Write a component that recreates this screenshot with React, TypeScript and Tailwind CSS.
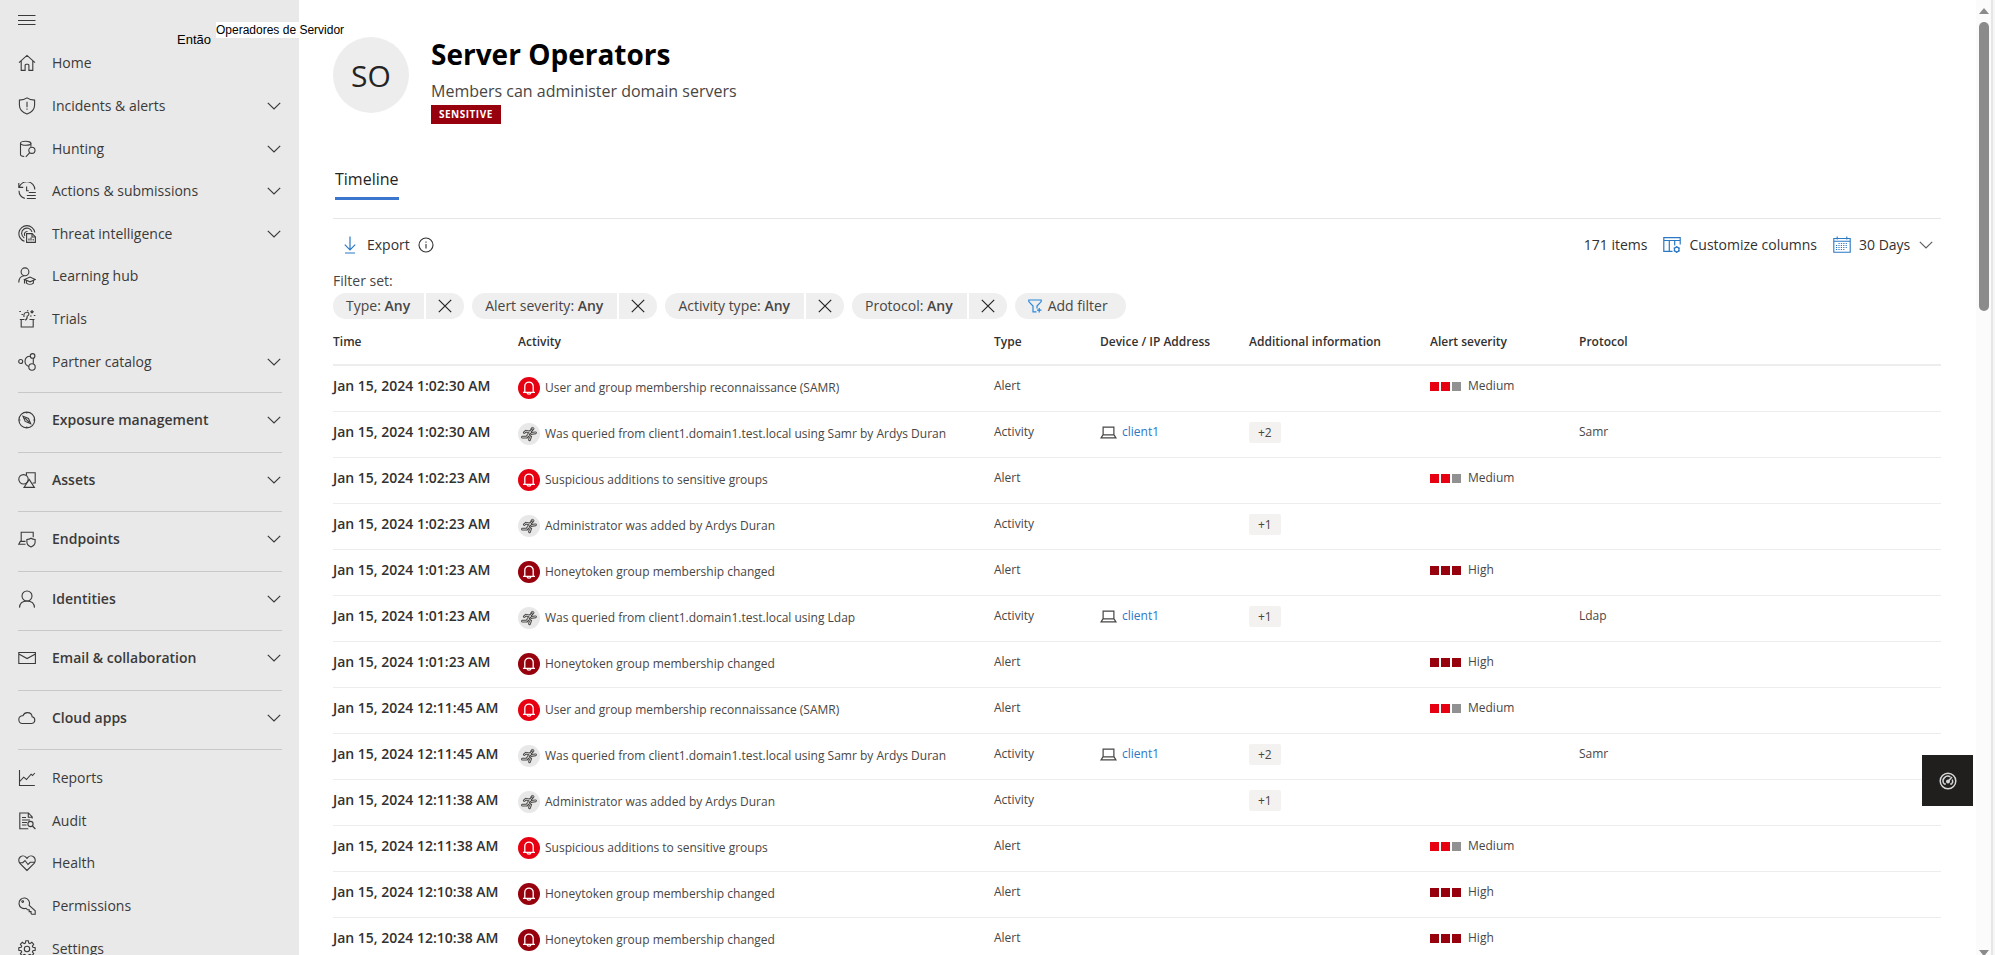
import { useState } from 'react';
import type { ReactNode } from 'react';

type Severity = 'Medium' | 'High';

interface TimelineRow {
  time: string;
  activity: string;
  type: 'Alert' | 'Activity';
  device?: string;
  extra?: string;
  severity?: Severity;
  protocol?: string;
}

const icons: Record<string, ReactNode> = {
  home: (
    <path d="M1 8.6 9 1.4l8 7.2M3.2 7v9.4h3.9v-5.2c0-.6.4-1 1-1h1.800c.6 0 1 .4 1 1v5.200h3.900V7" />
  ),
  incidents: (
    <>
      <path d="M9 .9c2 1.500 4.600 2.200 7.600 2.200v4.900c0 4.300-2.900 7.300-7.600 9.100C4.300 15.300 1.400 12.300 1.400 8V3.100C4.400 3.100 7 2.400 9 .9Z" />
      <path d="M9 4.800v5.400M9 11.500v1.300" />
    </>
  ),
  hunting: (
    <>
      <ellipse cx="7.700" cy="3.300" rx="5.200" ry="2" />
      <path d="M2.500 3.300v11.200c0 1 1.600 1.900 3.700 2M12.900 3.300v3.400" />
      <circle cx="13.900" cy="10.300" r="3.100" />
      <path d="m11.800 12.600-4 4.200" />
    </>
  ),
  actions: (
    <>
      <path d="M.8 1v4.400h4.400M1.200 5.200A8 8 0 0 1 16.800 7.600M1 8.800a8 8 0 0 0 5.800 7.600" />
      <path d="M8.600 4.500v4.300h2.200M10.800 10.500h7M8.800 13.500h9M8.800 16.500h9" />
    </>
  ),
  threat: (
    <>
      <path d="M6.500 16.300A8 8 0 1 1 16.800 7.500M6.300 13A5.300 5.300 0 1 1 14 6.800M7 10.800A2.700 2.700 0 0 1 9.500 6.500" />
      <path d="M8.600 8.600h5.500l3.300 3.300v5.500H8.600Z" />
      <path d="M14 8.600v3.400h3.400M11 15.500v-2M13 15.500v-3M15.200 15.500v-1.500" />
    </>
  ),
  learning: (
    <>
      <circle cx="7" cy="4.800" r="3.900" />
      <path d="M.8 15.500c0-3.700 2.200-6.400 5.400-6.800" />
      <path d="m6.500 12.500 5.500-2.400 5.300 2.400-5.300 2.300ZM8.400 13.500v2.600c2 1.500 5.200 1.500 7 0v-2.600M6.500 12.500v4" />
    </>
  ),
  trials: (
    <>
      <path d="M3.200 9.600v7.400h12V9.600M1.800 9.500h4.700M11.500 9.500h5M6 7c-.6-3 .6-4.800 3-4.800s2.600 3.300.4 3.600M9.200 5.800c.2 2.200-.4 3.700-2 4.400" />
      <path d="M1.300 1.500h1.600M3.500 4.500h1.400M12.800 1.800l1.200-1 1.200 1-1.200 1.200ZM12 6h1.600M15.800 5.500h1.600M9 .8h1.300" />
    </>
  ),
  partner: (
    <>
      <circle cx="2.700" cy="8.500" r="2" />
      <circle cx="14.600" cy="2.900" r="2.300" />
      <circle cx="14" cy="14" r="3.200" />
      <path d="M15.300 5.200v5.600M12.300 3.200C9 3.200 7 5.500 7 8.500c0 2.200 1.200 4 3.800 4.900" />
    </>
  ),
  exposure: (
    <>
      <circle cx="8.800" cy="9" r="7.900" />
      <path d="m5 5.200 5.500 2.300 2.200 5.200-5.500-2.300ZM6.500 6.700l4.500 4.500M8.800 1v1.600M8.800 15.400V17M.8 9h1.600M15.200 9h1.600" />
    </>
  ),
  assets: (
    <>
      <path d="M8.400 4.500V1.700h8.800V12h-2.600" />
      <circle cx="5.500" cy="8.300" r="4.700" />
      <path d="m11.200 8.400 5.200 8H6Z" />
    </>
  ),
  endpoints: (
    <>
      <path d="M3.200 11.400V2.300h12v5M7.500 11.400H2.300L.8 14.200h6.700" />
      <path d="M13 8.300c1.100.8 2.500 1.200 4.100 1.200v2.600c0 2.300-1.500 3.900-4.100 4.900-2.600-1-4.100-2.600-4.100-4.900V9.500c1.600 0 3-.4 4.100-1.200Z" />
    </>
  ),
  identities: (
    <>
      <circle cx="9" cy="6" r="5" />
      <path d="M1.500 17.600c.2-4 2.700-6.600 7.500-6.600s7.300 2.600 7.500 6.600" />
    </>
  ),
  email: <path d="M.8 3.500h16.600v11H.8ZM.8 5l8.300 4.500L17.400 5" />,
  cloud: (
    <path d="M4.200 14.500h9.600a3.400 3.400 0 0 0 .3-6.700C14 5.200 11.800 3.600 9.400 3.600c-2.200 0-3.700 1.200-4.500 3.100C2.600 6.500.8 8.200.8 10.600c0 2.300 1.500 3.900 3.400 3.900Z" />
  ),
  reports: <path d="M1.500 1v15.500h15.300M1.700 12.500l4-4.300 2.800 2.300 4.600-5.300 1.400 1.300L16.800 4" />,
  audit: (
    <>
      <path d="M14.200 6.500V5L10.500 1H1.800v15.800h8.500M10.300 1.200v4h4" />
      <path d="M4 5.500h4M4 8h8M4 10.500h5M4 13h4.500" />
      <circle cx="12.500" cy="12" r="2.600" />
      <path d="m14.400 14 3 3" />
    </>
  ),
  health: (
    <path d="M9 16.500 1.900 9.300C.3 7.500.4 4.600 2.200 3c1.800-1.500 4.400-1.300 5.900.4l.9 1 .9-1c1.500-1.700 4.100-1.900 5.900-.4 1.800 1.600 1.900 4.500.3 6.300ZM1.500 8.700h3.300L7 6.500l3 4 2.200-2.200h4.500" />
  ),
  permissions: (
    <>
      <path d="M11.200 8.300a5.300 5.300 0 1 0-3.100 3l1.400 1.500h1.700v1.800h1.800v1.700l.8.900h3.400v-3.400Z" />
      <circle cx="4.700" cy="4.600" r=".9" />
    </>
  ),
  settings: (
    <>
      <circle cx="9" cy="9" r="2.700" />
      <path d="m7.800.8-.4 2.300-1.200.5-1.900-1.300-1.900 1.900 1.300 1.900-.5 1.200-2.400.4v2.600l2.400.4.5 1.200-1.300 1.900 1.900 1.900 1.900-1.300 1.200.5.4 2.300h2.500l.4-2.300 1.200-.5 1.900 1.300 1.900-1.900-1.300-1.900.5-1.200 2.300-.4V7.700l-2.300-.4-.5-1.200 1.300-1.900-1.900-1.900L12 3.600l-1.200-.5-.5-2.300Z" />
    </>
  ),
};

const mainItems = [
  { label: 'Home', icon: 'home' },
  { label: 'Incidents & alerts', icon: 'incidents', expandable: true },
  { label: 'Hunting', icon: 'hunting', expandable: true },
  { label: 'Actions & submissions', icon: 'actions', expandable: true },
  { label: 'Threat intelligence', icon: 'threat', expandable: true },
  { label: 'Learning hub', icon: 'learning' },
  { label: 'Trials', icon: 'trials' },
  { label: 'Partner catalog', icon: 'partner', expandable: true },
];

const sectionItems = [
  { label: 'Exposure management', icon: 'exposure' },
  { label: 'Assets', icon: 'assets' },
  { label: 'Endpoints', icon: 'endpoints' },
  { label: 'Identities', icon: 'identities' },
  { label: 'Email & collaboration', icon: 'email' },
  { label: 'Cloud apps', icon: 'cloud' },
];

const bottomItems = [
  { label: 'Reports', icon: 'reports' },
  { label: 'Audit', icon: 'audit' },
  { label: 'Health', icon: 'health' },
  { label: 'Permissions', icon: 'permissions' },
  { label: 'Settings', icon: 'settings' },
];

const initialFilters = ['Type', 'Alert severity', 'Activity type', 'Protocol'];

const SAMR_ALERT = 'User and group membership reconnaissance (SAMR)';
const SAMR_QUERY = 'Was queried from client1.domain1.test.local using Samr by Ardys Duran';
const LDAP_QUERY = 'Was queried from client1.domain1.test.local using Ldap';
const SUSPICIOUS = 'Suspicious additions to sensitive groups';
const ADMIN_ADDED = 'Administrator was added by Ardys Duran';
const HONEYTOKEN = 'Honeytoken group membership changed';

const rows: TimelineRow[] = [
  { time: 'Jan 15, 2024 1:02:30 AM', activity: SAMR_ALERT, type: 'Alert', severity: 'Medium' },
  { time: 'Jan 15, 2024 1:02:30 AM', activity: SAMR_QUERY, type: 'Activity', device: 'client1', extra: '+2', protocol: 'Samr' },
  { time: 'Jan 15, 2024 1:02:23 AM', activity: SUSPICIOUS, type: 'Alert', severity: 'Medium' },
  { time: 'Jan 15, 2024 1:02:23 AM', activity: ADMIN_ADDED, type: 'Activity', extra: '+1' },
  { time: 'Jan 15, 2024 1:01:23 AM', activity: HONEYTOKEN, type: 'Alert', severity: 'High' },
  { time: 'Jan 15, 2024 1:01:23 AM', activity: LDAP_QUERY, type: 'Activity', device: 'client1', extra: '+1', protocol: 'Ldap' },
  { time: 'Jan 15, 2024 1:01:23 AM', activity: HONEYTOKEN, type: 'Alert', severity: 'High' },
  { time: 'Jan 15, 2024 12:11:45 AM', activity: SAMR_ALERT, type: 'Alert', severity: 'Medium' },
  { time: 'Jan 15, 2024 12:11:45 AM', activity: SAMR_QUERY, type: 'Activity', device: 'client1', extra: '+2', protocol: 'Samr' },
  { time: 'Jan 15, 2024 12:11:38 AM', activity: ADMIN_ADDED, type: 'Activity', extra: '+1' },
  { time: 'Jan 15, 2024 12:11:38 AM', activity: SUSPICIOUS, type: 'Alert', severity: 'Medium' },
  { time: 'Jan 15, 2024 12:10:38 AM', activity: HONEYTOKEN, type: 'Alert', severity: 'High' },
  { time: 'Jan 15, 2024 12:10:38 AM', activity: HONEYTOKEN, type: 'Alert', severity: 'High' },
];

const NavIcon = ({ name }: { name: string }) => (
  <svg
    className="w-[18px] h-[18px] shrink-0 text-[#3b3a39]"
    viewBox="0 0 18 18"
    fill="none"
    stroke="currentColor"
    strokeWidth="1.1"
  >
    {icons[name]}
  </svg>
);

const Chevron = ({ className }: { className: string }) => (
  <svg className={className} viewBox="0 0 14 8" fill="none" stroke="currentColor" strokeWidth="1.2">
    <path d="m.8.8 6.200 6.200L13.200.8" />
  </svg>
);

const NavItem = ({ label, icon, expandable }: { label: string; icon: string; expandable?: boolean }) => {
  const [isOpen, setIsOpen] = useState(false);

  if (!expandable) {
    return (
      <a href="#" className="flex items-center gap-4 text-[#3b3a39]">
        <NavIcon name={icon} />
        <span>{label}</span>
      </a>
    );
  }

  return (
    <button
      type="button"
      aria-expanded={isOpen}
      onClick={() => setIsOpen(!isOpen)}
      className="flex items-center gap-4 text-left text-[#3b3a39]"
    >
      <NavIcon name={icon} />
      <span className="grow">{label}</span>
      <Chevron className="w-[14px] h-2 mr-px" />
    </button>
  );
};

const SideNav = () => (
  <nav className="relative w-[299px] shrink-0 bg-[#e9e9e9] pl-[18px] pr-[17px] text-sm">
    <button type="button" aria-label="Menu" className="block pt-3 pb-3">
      <svg className="w-[18px] h-[18px] text-[#3b3a39]" viewBox="0 0 18 18" stroke="currentColor" strokeWidth="1.1">
        <path d="M0 3.500h17.500M0 8.500h17.500M0 12.500h17.500" />
      </svg>
    </button>
    <div className="grid auto-rows-fr h-[341px]">
      {mainItems.map((item) => (
        <NavItem key={item.label} {...item} />
      ))}
    </div>
    <div className="grid auto-rows-fr h-[358px] mt-[9px] border-b border-[#c8c8c8] font-semibold">
      {sectionItems.map((item) => (
        <div key={item.label} className="grid border-t border-[#c8c8c8] pb-1">
          <NavItem {...item} expandable />
        </div>
      ))}
    </div>
    <div className="grid auto-rows-fr h-[213px] mt-[7px]">
      {bottomItems.map((item) => (
        <NavItem key={item.label} {...item} />
      ))}
    </div>

    {/* Translated labels floating over the page */}
    <span className="absolute left-[177px] top-[30px] z-10 font-['Liberation_Sans',sans-serif] text-[13px] leading-5 text-black">
      Então
    </span>
    <span className="absolute left-[216px] top-[22px] z-10 whitespace-nowrap bg-white font-['Liberation_Sans',sans-serif] text-[12px] leading-4 text-black">
      Operadores de Servidor
    </span>
  </nav>
);

const PageHeader = () => (
  <header className="flex gap-[22px] pt-9">
    <div className="flex items-center justify-center w-[76px] h-[76px] mt-px rounded-full bg-[#ededed] text-[30px] text-[#252423]">
      SO
    </div>
    <div className="flex flex-col items-start">
      <h1 className="text-[28px] leading-9 font-bold text-black">Server Operators</h1>
      <p className="mt-[7px] text-base leading-6 text-[#484644]">Members can administer domain servers</p>
      <span className="mt-[2px] px-2 bg-[#97000d] text-[10px] leading-[19px] font-bold tracking-wider text-white">
        SENSITIVE
      </span>
    </div>
  </header>
);

const Toolbar = () => (
  <div className="flex items-center justify-between pt-[14px] pb-3 text-[#323130]">
    <div className="flex items-center pl-[10px] text-sm leading-6">
      <button type="button" className="flex items-center gap-[10px]">
        <svg className="w-[14px] h-[18px] text-[#2b78c5]" viewBox="0 0 14 18" fill="none" stroke="currentColor" strokeWidth="1.2">
          <path d="M7 .5v13M1.800 8.600 7 13.800l5.200-5.200M2 17h10" />
        </svg>
        Export
      </button>
      <button type="button" aria-label="Export info" className="ml-2">
        <svg className="w-4 h-4" viewBox="0 0 16 16" fill="none" stroke="currentColor" strokeWidth="1.1">
          <circle cx="8" cy="8" r="7" />
          <path d="M8 7v4.500M8 4.500v1.300" />
        </svg>
      </button>
    </div>
    <div className="flex items-center pr-2 text-sm leading-6">
      <span>171 items</span>
      <button type="button" className="flex items-center gap-2 ml-4">
        <svg className="w-[18px] h-[18px] text-[#2b78c5]" viewBox="0 0 18 18" fill="none" stroke="currentColor" strokeWidth="1.2">
          <path d="M9.500 15.400H.8V1.600h16.400v7M.8 4.500h16.400M6.300 4.500v10.900M11.700 4.500v5" />
          <circle cx="13.700" cy="13.500" r="2.300" />
          <path d="M13.700 10v1.200M13.700 15.800V17M10.700 11.800l1 .6M15.700 14.600l1 .6M10.700 15.200l1-.6M15.700 12.400l1-.6" />
        </svg>
        Customize columns
      </button>
      <label className="flex items-center gap-2 ml-4">
        <svg className="w-[18px] h-[18px] text-[#2b78c5]" viewBox="0 0 18 18" fill="none" stroke="currentColor" strokeWidth="1.1">
          <path d="M.8 2.500h16.400v13.700H.8ZM.8 5.200h16.400M4.200.5v3M13.800.5v3" />
          <path d="M5.500 7.500h9.500M3 9.500h12M3 11.500h12M3 13.500h9" strokeDasharray="1.200 1.200" />
        </svg>
        <select aria-label="Time range" className="appearance-none bg-transparent">
          <option>30 Days</option>
          <option>7 Days</option>
        </select>
        <Chevron className="w-[14px] h-2 text-[#605e5c]" />
      </label>
    </div>
  </div>
);

const FilterBar = () => {
  const [filters, setFilters] = useState(initialFilters);

  return (
    <div className="text-sm text-[#484644]">
      <p className="leading-6">Filter set:</p>
      <div className="flex gap-2 leading-[26px]">
        {filters.map((filter) => (
          <div key={filter} className="flex gap-[2px]">
            <button type="button" className="pl-[13px] pr-[14px] rounded-l-full bg-[#efefef]">
              {filter}: <span className="font-semibold">Any</span>
            </button>
            <button
              type="button"
              aria-label={`Remove ${filter} filter`}
              onClick={() => setFilters(filters.filter((f) => f !== filter))}
              className="flex items-center px-3 rounded-r-full bg-[#efefef]"
            >
              <svg className="w-[14px] h-[14px] text-[#252423]" viewBox="0 0 14 14" stroke="currentColor" strokeWidth="1.2">
                <path d="m.8.8 12.400 12.400M13.200.8.8 13.200" />
              </svg>
            </button>
          </div>
        ))}
        <button type="button" className="flex items-center gap-[6px] pl-[13px] pr-[18px] rounded-full bg-[#efefef]">
          <svg className="w-[14px] h-[14px] text-[#2b88d8]" viewBox="0 0 14 14" fill="none" stroke="currentColor" strokeWidth="1.2">
            <path d="M8.500 12.800H5V7L.8 2.600V1h12.400v1.600L9 7v2.500M11.200 9v4.500M9 11.200h4.500" />
          </svg>
          Add filter
        </button>
      </div>
    </div>
  );
};

const ActivityIcon = ({ row }: { row: TimelineRow }) => {
  if (row.type === 'Activity') {
    const limbs = 'M14 6.800 12 9 8 8.200 6.300 9.500M12 9l1.500 1.500 4-.7M12 9l-2 3.200-1.200 2H4.500M10 12.200l2.500 1.600-1 3';
    return (
      <svg className="w-[22px] h-[22px] shrink-0" viewBox="0 0 22 22" fill="none">
        <circle cx="11" cy="11" r="11" fill="#e8e8e8" />
        <circle cx="14.500" cy="5.800" r="1.400" fill="#e8e8e8" stroke="#484644" />
        <path d={limbs} stroke="#484644" strokeWidth="2.800" strokeLinecap="round" />
        <path d={limbs} stroke="#c9c9c9" strokeWidth="1" strokeLinecap="round" />
      </svg>
    );
  }
  return (
    <svg
      className={`w-[22px] h-[22px] shrink-0 ${row.severity === 'High' ? 'text-[#97000d]' : 'text-[#e60012]'}`}
      viewBox="0 0 22 22"
      fill="none"
    >
      <circle cx="11" cy="11" r="11" fill="currentColor" />
      <path
        d="M6.800 15V9.300a4.200 4.200 0 0 1 8.400 0V15M5 15.300h12M9 15.800c.2 1.800 3.800 1.800 4 0"
        stroke="#fff"
        strokeWidth="1.300"
      />
    </svg>
  );
};

const SeverityCell = ({ severity }: { severity: Severity }) => {
  const on = severity === 'High' ? 'bg-[#97000d]' : 'bg-[#e60012]';
  return (
    <div className="flex items-center gap-[2px]">
      <span className={`w-[9px] h-[9px] ${on}`} />
      <span className={`w-[9px] h-[9px] ${on}`} />
      <span className={`w-[9px] h-[9px] ${severity === 'High' ? on : 'bg-[#919191]'}`} />
      <span className="ml-[5px]">{severity}</span>
    </div>
  );
};

const TimelineTable = () => (
  <table className="w-full table-fixed text-left text-xs text-[#484644]">
    <colgroup>
      <col className="w-[185px]" />
      <col className="w-[476px]" />
      <col className="w-[106px]" />
      <col className="w-[149px]" />
      <col className="w-[181px]" />
      <col className="w-[149px]" />
      <col />
    </colgroup>
    <thead>
      <tr className="h-[46px] border-b-2 border-[#ededed] text-[#323130] [&>th]:font-semibold">
        <th>Time</th>
        <th>Activity</th>
        <th>Type</th>
        <th>Device / IP Address</th>
        <th>Additional information</th>
        <th>Alert severity</th>
        <th>Protocol</th>
      </tr>
    </thead>
    <tbody>
      {rows.map((row, i) => (
        <tr key={i} className="h-[46px] border-b border-[#ededed] whitespace-nowrap [&>td]:pb-1">
          <td className="text-sm font-semibold text-[#323130]">{row.time}</td>
          <td>
            <div className="flex items-center gap-[5px] pt-1">
              <ActivityIcon row={row} />
              {row.activity}
            </div>
          </td>
          <td>{row.type}</td>
          <td>
            {row.device && (
              <a href="#" className="flex items-center gap-[5px] text-[#2b78c5]">
                <svg className="w-[17px] h-[13px] text-[#484644]" viewBox="0 0 18 14" fill="none" stroke="currentColor" strokeWidth="1.300">
                  <path d="M3.200 9.500V1.200h11.600v8.300M3 9.500h12l2 3.300H1Z" />
                </svg>
                {row.device}
              </a>
            )}
          </td>
          <td>
            {row.extra && (
              <button type="button" className="px-[9px] rounded-xs bg-[#f3f2f1] leading-[21px]">
                {row.extra}
              </button>
            )}
          </td>
          <td>{row.severity && <SeverityCell severity={row.severity} />}</td>
          <td>{row.protocol}</td>
        </tr>
      ))}
    </tbody>
  </table>
);

const ScrollTrack = () => (
  <div className="flex flex-col items-center justify-between w-[15px] shrink-0 bg-[#fbfbfb] pt-2">
    <div className="flex flex-col items-center gap-2">
      <svg className="w-[10px] h-[6px] text-[#8b8b8b]" viewBox="0 0 10 6" fill="currentColor">
        <path d="M5 0l5 6H0Z" />
      </svg>
      <div className="w-[10px] h-[289px] rounded-full bg-[#8b8b8b]" />
    </div>
    <svg className="w-[10px] h-[5px] text-[#8b8b8b]" viewBox="0 0 10 5" fill="currentColor">
      <path d="M0 0h10L6 5H4Z" />
    </svg>
  </div>
);

const App = () => {
  return (
    <div className="flex h-screen overflow-hidden bg-white font-['Open_Sans',sans-serif]">
      <SideNav />
      <main className="grow min-w-0 pl-[34px] pr-[35px]">
        <PageHeader />
        <div role="tablist" className="mt-[43px] pb-[18px] pl-[2px] border-b border-[#e6e6e6]">
          <button type="button" role="tab" aria-selected="true" className="block pb-[6px] border-b-3 border-[#3b76ce] text-base leading-6 text-[#252423]">
            Timeline
          </button>
        </div>
        <Toolbar />
        <FilterBar />
        <TimelineTable />
      </main>
      <ScrollTrack />
      <div className="w-1 shrink-0 border-l-2 border-[#e6e6e6] bg-[#f6f6f6]" />

      <button
        type="button"
        aria-label="Feedback"
        className="fixed right-[22px] top-[755px] flex items-center justify-center w-[51px] h-[51px] bg-[#201f1e] text-[#d8d8d8]"
      >
        <svg className="w-[18px] h-[18px]" viewBox="0 0 18 18" fill="none" stroke="currentColor" strokeWidth="1.500">
          <circle cx="9" cy="9" r="7.800" />
          <path d="M4.800 11.500a4.800 4.800 0 0 1 6.600-6.600M13.300 7.500a4.800 4.800 0 0 1-.2 4M4.800 12h2M11.200 12h2M9 9.500l4-4.500" />
          <circle cx="9" cy="9.500" r="1.200" fill="currentColor" />
        </svg>
      </button>
    </div>
  );
};

export default App;
